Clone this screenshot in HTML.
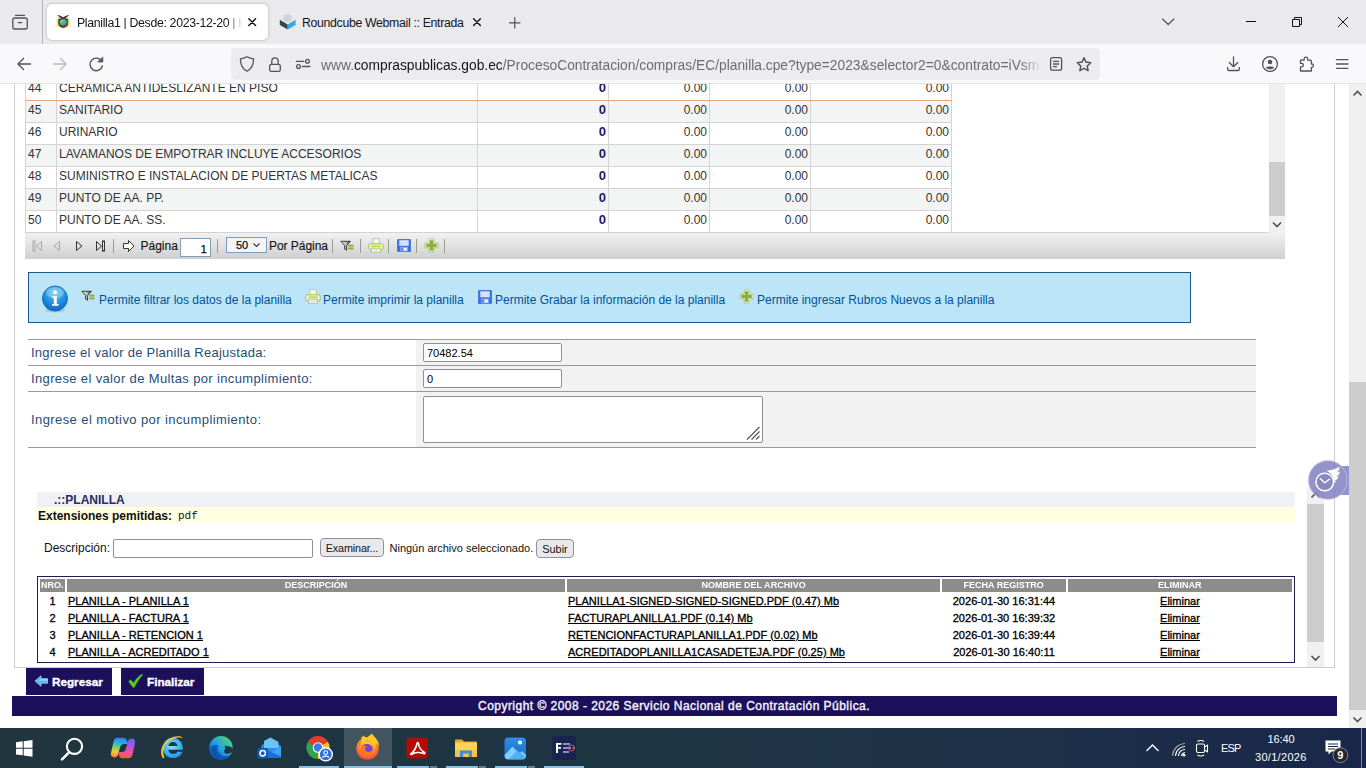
<!DOCTYPE html>
<html>
<head>
<meta charset="utf-8">
<title>Planilla1</title>
<style>
*{box-sizing:border-box;margin:0;padding:0}
html,body{width:1366px;height:768px;overflow:hidden;background:#fff;font-family:"Liberation Sans",sans-serif}
body{position:relative;font-family:"Liberation Sans",sans-serif;color:#000}
.a{position:absolute}
.t{position:absolute;white-space:nowrap;line-height:1}
/* browser chrome */
#tabbar{left:0;top:0;width:1366px;height:44px;background:#eaeaed}
#toolbar{left:0;top:44px;width:1366px;height:40px;background:#f9f9fb;border-bottom:1px solid #e3e3e7}
#tab1{left:47px;top:4px;width:221px;height:36px;background:#fff;border-radius:5px;box-shadow:0 0 3px rgba(0,0,0,.28)}
#urlbar{left:231px;top:48px;width:869px;height:32px;background:#ececef;border-radius:5px}
.tabtxt{font-size:12.3px;letter-spacing:-.33px;color:#15141a;top:17px}
/* page */
#page{left:14px;top:84px;width:1321px;height:584px;border:1px solid #ccc;border-top:none;background:#fff}
/* grid */
.row{position:absolute;left:25px;width:927px;height:22px;border-bottom:1px solid #d4d4d4;font-size:12px;color:#333}
.row.alt{background:#f3f4f4}
.row span{position:absolute;top:0;height:21px;line-height:19px;white-space:nowrap}
.row .c{border-left:1px solid #d4d4d4}
.row .n{left:0;width:31px;padding-left:2px;border-left:1px solid #d4d4d4}
.row .d{left:31px;width:421px;padding-left:2px;border-left:1px solid #d4d4d4}
.row .q{left:452px;width:131px;text-align:right;padding-right:2px;border-left:1px solid #d4d4d4;font-weight:bold;font-size:13px;line-height:18px!important;color:#1d1d6b}
.row .v1{left:583px;width:101px;text-align:right;padding-right:2px;border-left:1px solid #d4d4d4}
.row .v2{left:684px;width:101px;text-align:right;padding-right:2px;border-left:1px solid #d4d4d4}
.row .v3{left:785px;width:142px;text-align:right;padding-right:2px;border-left:1px solid #d4d4d4;border-right:1px solid #d4d4d4}
#pager{left:25px;top:233px;width:1260px;height:26px;background:linear-gradient(#f1f1f1,#e4e4e4 40%,#cfcfcf);font-size:12.6px}
/* info */
#info{left:28px;top:272px;width:1163px;height:51px;background:#bde5f8;border:1px solid #1c5a8c}
.it{font-size:12px;color:#00529b;top:294px}
/* form */
.fl{position:absolute;left:28px;width:1228px;height:1px;background:#999}
.lab{font-size:13px;color:#1f4e79;left:31px;letter-spacing:.55px}
.inp{position:absolute;background:#fff;border:1px solid #8f8f95;border-radius:2px;font-size:11px;padding-left:3px}
/* files */
.th{position:absolute;top:579px;height:13px;background:#8c8c8c;color:#fff;font-weight:bold;font-size:9.800px;text-align:center;line-height:11px}
.th span{display:inline-block;transform:scaleX(.92);white-space:nowrap}
.fr{font-size:11px;font-weight:400;color:#000;letter-spacing:.02px;-webkit-text-stroke:.32px #000}
.u{text-decoration:underline}
.btn{position:absolute;top:668px;height:27px;background:#1c0f5c;color:#fff;font-weight:bold;font-size:12px}
/* taskbar */
#taskbar{left:0;top:728px;width:1366px;height:40px;background:linear-gradient(90deg,#20353e 0%,#1e3545 50%,#1c2f48 80%,#19264a 100%)}
.tray{color:#fff;font-size:12px}
</style>
</head>
<body>
<!-- ===== TAB BAR ===== -->
<div id="tabbar" class="a"></div>
<div id="toolbar" class="a"></div>
<div class="a" style="left:42px;top:0;width:1px;height:44px;background:#b4b4ba"></div>
<div id="tab1" class="a"></div>
<div class="t tabtxt" style="left:77px;width:166px;overflow:hidden;-webkit-mask-image:linear-gradient(90deg,#000 150px,transparent 166px);mask-image:linear-gradient(90deg,#000 150px,transparent 166px)">Planilla1 | Desde: 2023-12-20 | H</div>
<div class="t tabtxt" style="left:302px">Roundcube Webmail :: Entrada</div>
<div id="urlbar" class="a"></div>
<svg class="a" style="left:0;top:0" width="1366" height="84" fill="none" stroke="#52525a" stroke-width="1.3" stroke-linecap="round" stroke-linejoin="round">
<!-- firefox view -->
<rect x="12.800" y="18" width="14.500" height="11" rx="2"/><path d="M15.500 15.300h9"/><path d="M18.300 22.600h3.500"/>
<!-- close tab 1 -->
<path d="M248.800 18.800l6.800 6.800M255.600 18.800l-6.800 6.800" stroke="#15141a" stroke-width="1.4"/>
<path d="M473.600 18.800l6.800 6.800M480.400 18.800l-6.800 6.800" stroke="#15141a" stroke-width="1.4"/>
<!-- new tab -->
<path d="M509.500 22.800h10.500M514.750 17.500v10.500" stroke-width="1.200"/>
<!-- chevron -->
<path d="M1162.500 19l5.700 5.500l5.700-5.500" stroke-width="1.200"/>
<!-- window controls -->
<g stroke="#111" stroke-width="1" stroke-linecap="butt" stroke-linejoin="miter"><path d="M1246 21.500h10"/><path d="M1292.500 19.500h7v7h-7z"/><path d="M1294.500 19.500v-2h7v7h-2"/><path d="M1338 17l10 10M1348 17l-10 10"/></g>
<!-- back / forward / reload -->
<path d="M30.500 64h-12.500M23.500 58.500l-5.500 5.500l5.500 5.500" stroke-width="1.400"/>
<path d="M53.500 64h12.500M60.500 58.500l5.500 5.500l-5.500 5.500" stroke="#b9b9bf" stroke-width="1.400"/>
<path d="M101.800 61.300a6.300 6.300 0 1 0 .6 4.700" stroke-width="1.400"/><path d="M102.800 57.300v4.700h-4.700z" fill="#52525a" stroke-width=".8"/>
<!-- shield -->
<path d="M247 56.700c2.300 1.300 4.300 1.900 6.600 2.100c0 6-1.800 10-6.600 12.400c-4.800-2.400-6.600-6.400-6.600-12.400c2.300-.2 4.300-.8 6.600-2.100z"/>
<!-- lock -->
<rect x="269.700" y="64.300" width="10.600" height="7" rx="1.600"/><path d="M271.800 64.300v-3.300a3.200 3.200 0 0 1 6.400 0v3.300"/>
<!-- permissions -->
<path d="M296.300 61.300h7.500"/><circle cx="307.500" cy="61.300" r="1.900"/><path d="M302.500 66.500h7.500"/><circle cx="298.500" cy="66.500" r="1.900"/>
<!-- reader -->
<rect x="1050.600" y="57.600" width="11" height="12.600" rx="2"/><path d="M1053.500 61.300h5.200M1053.500 64h5.200M1053.500 66.700h3"/>
<!-- star -->
<path d="M1084 57.800l2 4.300l4.700.6l-3.500 3.300l.9 4.600l-4.100-2.300l-4.100 2.300l.9-4.600l-3.500-3.300l4.700-.6z" stroke-width="1.500"/>
<!-- download -->
<path d="M1233.500 57v9.500M1229.300 62.500l4.200 4.200l4.200-4.200M1227.700 67.500v2a1 1 0 0 0 1 1h9.600a1 1 0 0 0 1-1v-2"/>
<!-- account -->
<circle cx="1270" cy="64" r="7.400"/><circle cx="1270" cy="62" r="2.300" fill="#52525a" stroke="none"/><path d="M1265.800 67.500c1-1.500 7.400-1.500 8.400 0c-1 2.300-7.400 2.300-8.400 0z" fill="#52525a" stroke="none"/>
<!-- extensions -->
<path d="M1300.500 71v-4.200h1.200a1.700 1.700 0 0 0 0-3.400h-1.200v-3.200h3.600v-1.300a1.800 1.800 0 0 1 3.600 0v1.300h2.700a1 1 0 0 1 1 1v2.800h.3a1.700 1.700 0 0 1 0 3.400h-.3v3.600z" transform="translate(0,0)"/>
<!-- menu -->
<path d="M1336.500 59.700h11.500M1336.500 64h11.500M1336.500 68.300h11.500" stroke-width="1.300"/>
</svg>
<!-- favicons -->
<svg class="a" style="left:56px;top:14px" width="15" height="15"><defs><linearGradient id="ec" x1="0" y1="0" x2="1" y2="1"><stop offset="0" stop-color="#9fe3d6"/><stop offset=".5" stop-color="#45b9b0"/><stop offset="1" stop-color="#3b8fd6"/></linearGradient><filter id="eb" x="-20%" y="-20%" width="140%" height="140%"><feGaussianBlur stdDeviation=".7"/></filter></defs><rect x=".6" y="4.600" width="13.400" height="8.600" rx="2" fill="#f6ea5e" opacity=".85" filter="url(#eb)"/><path d="M1.300 1c2 .3 4 .9 5.900 2.300c1.900-1.400 3.900-2 5.900-2.300c-1.500 1.600-3.300 3-4.600 3.400l-1.300 1.300l-1.300-1.300c-1.300-.4-3.100-1.800-4.600-3.400z" fill="#3c342c"/><path d="M2.300 4.800c1.500-.6 3.200-.9 4.900-.9s3.400.3 4.900.9v5c0 2.400-2 3.600-4.900 4.300c-2.900-.7-4.900-1.900-4.900-4.300z" fill="#5b4a2e"/><path d="M2.300 5.500c.5-.3 1-.6 1.500-.7v6.700c-1-.6-1.500-1.400-1.500-2.400zM12.100 5.500c-.5-.3-1-.6-1.500-.7v6.700c1-.6 1.500-1.400 1.500-2.400z" fill="#3f6a3a" opacity=".8"/><ellipse cx="7.300" cy="8.300" rx="3.300" ry="2.900" fill="url(#ec)"/><path d="M5.800 12.700h3l-1.500 1.700z" fill="#c4452f"/></svg>
<svg class="a" style="left:279px;top:14px" width="18" height="16"><path d="M8.700 .300c2.600 0 4.400 1.600 4.400 3.800v4.600L8.700 11 4.300 8.700V4.100c0-2.200 1.800-3.800 4.400-3.800z" fill="#e6e8ea"/><path d="M8.700 .300c2.600 0 4.400 1.600 4.400 3.800v2L8.700 8.500 4.300 6.100v-2c0-2.200 1.800-3.800 4.400-3.800z" fill="#d0d4d7"/><path d="M.800 5.800l7.900 4.600v5.200L.800 11z" fill="#37474f"/><path d="M16.600 5.800l-7.900 4.600v5.200l7.900-4.600z" fill="#37a8e0"/></svg>
<div class="t" style="left:321px;top:59px;font-size:13.8px;color:#6b6b75;width:720px;-webkit-mask-image:linear-gradient(90deg,#000 700px,transparent 720px);mask-image:linear-gradient(90deg,#000 700px,transparent 720px)">www.<span style="color:#15141a">compraspublicas.gob.ec</span>/ProcesoContratacion/compras/EC/planilla.cpe?type=2023&amp;selector2=0&amp;contrato=iVsm</div>

<!-- ===== PAGE ===== -->
<div id="page" class="a"></div>
<div id="grid" class="a" style="left:0;top:84px;width:1366px;height:149px;overflow:hidden"><div class="a" style="left:0;top:-84px">
<div class="row" style="top:79px;border-bottom-color:#f0a674"><span class="n">44</span><span class="d">CERAMICA ANTIDESLIZANTE EN PISO</span><span class="q">0</span><span class="v1">0.00</span><span class="v2">0.00</span><span class="v3">0.00</span></div>
<div class="row alt" style="top:101px"><span class="n">45</span><span class="d">SANITARIO</span><span class="q">0</span><span class="v1">0.00</span><span class="v2">0.00</span><span class="v3">0.00</span></div>
<div class="row" style="top:123px"><span class="n">46</span><span class="d">URINARIO</span><span class="q">0</span><span class="v1">0.00</span><span class="v2">0.00</span><span class="v3">0.00</span></div>
<div class="row alt" style="top:145px"><span class="n">47</span><span class="d">LAVAMANOS DE EMPOTRAR INCLUYE ACCESORIOS</span><span class="q">0</span><span class="v1">0.00</span><span class="v2">0.00</span><span class="v3">0.00</span></div>
<div class="row" style="top:167px"><span class="n">48</span><span class="d">SUMINISTRO E INSTALACION DE PUERTAS METALICAS</span><span class="q">0</span><span class="v1">0.00</span><span class="v2">0.00</span><span class="v3">0.00</span></div>
<div class="row alt" style="top:189px"><span class="n">49</span><span class="d">PUNTO DE AA. PP.</span><span class="q">0</span><span class="v1">0.00</span><span class="v2">0.00</span><span class="v3">0.00</span></div>
<div class="row" style="top:211px"><span class="n">50</span><span class="d">PUNTO DE AA. SS.</span><span class="q">0</span><span class="v1">0.00</span><span class="v2">0.00</span><span class="v3">0.00</span></div>
</div></div>
<div class="a" style="left:25px;top:232px;width:1260px;height:1px;background:#d2d2d2"></div>
<!-- grid scrollbar -->
<div class="a" style="left:1269px;top:84px;width:16px;height:149px;background:#f0f0f0"></div>
<div class="a" style="left:1269px;top:162px;width:16px;height:54px;background:#cdcdcd"></div>
<svg class="a" style="left:1269px;top:216px" width="16" height="17"><path d="M4 6.5l4 4 4-4" fill="none" stroke="#505050" stroke-width="1.6"/></svg>
<div id="pager" class="a"></div>

<!-- pager content -->
<svg class="a" style="left:25px;top:233px" width="430" height="26">
<g fill="none" stroke="#a8a8a8" stroke-width="1"><rect x="8" y="8" width="2" height="10"/><path d="M16.500 8.500v9l-5-4.500z"/><path d="M34.5 8.5v9l-5.5-4.5z"/></g>
<g fill="none" stroke="#333" stroke-width="1"><path d="M51.5 8.5v9l5.5-4.5z"/><path d="M71.500 8.500v9l5-4.500z"/><rect x="77.500" y="8" width="2" height="10"/></g>
<g stroke="#9a9a94" stroke-width="1"><path d="M88.5 6v14M192.5 6v14M307.5 6v14M335.5 6v14M363.5 6v14M391.5 6v14M419.5 6v14"/></g>
<path d="M98.500 10.500h5v-3l5.500 5.500l-5.500 5.500v-3h-5z" fill="#fff" stroke="#222" stroke-width=".9" stroke-linejoin="round"/>
</svg>
<div class="t" style="left:140.500px;top:239.500px;font-size:12px;color:#151515;-webkit-text-stroke:.15px #151515">Página</div>
<div class="a" style="left:180px;top:238px;width:31px;height:19px;background:#fff;border:1px solid #7f9db9;font-size:11.500px;text-align:right;padding-right:3px;line-height:20px;color:#111;-webkit-text-stroke:.25px #111">1</div>
<div class="a" style="left:226px;top:237px;width:41px;height:16px;background:#f4f4f4;border:1px solid #7f9db9;font-size:11px;line-height:15px;padding-left:9px;color:#111;-webkit-text-stroke:.25px #111">50</div>
<svg class="a" style="left:252px;top:241px" width="9" height="8"><path d="M1.500 2.500l3 3l3-3" fill="none" stroke="#333" stroke-width="1.1"/></svg>
<div class="t" style="left:269px;top:239.500px;font-size:12px;letter-spacing:-.05px;color:#151515;-webkit-text-stroke:.15px #151515">Por Página</div>
<svg class="a" style="left:340px;top:239.500px" width="15" height="12"><defs><linearGradient id="fg" x1="0" y1="0" x2="1" y2="0"><stop offset="0" stop-color="#f2f2f2"/><stop offset=".55" stop-color="#bdbdbd"/><stop offset="1" stop-color="#2a2a2a"/></linearGradient></defs><path d="M0.800 1.300h9.600L6.600 5.500v4.700L4.600 9V5.500z" fill="url(#fg)" stroke="#2b2b2b" stroke-width=".9" stroke-linejoin="round"/><rect x="8.300" y="4.700" width="5.200" height="1.900" fill="#8daa2c"/><rect x="8.300" y="7.500" width="5.200" height="1.900" fill="#8daa2c"/></svg>
<svg class="a" style="left:367.500px;top:237.500px" width="16" height="16"><rect x="5" y="0.700" width="6.200" height="6.500" fill="#fbfbf6" stroke="#b7c77e" stroke-width=".9"/><rect x="0.800" y="5.800" width="14.400" height="6.200" rx="2" fill="#f3f6e6" stroke="#a3bb58" stroke-width="1"/><rect x="3.300" y="7.400" width="9.400" height="1.900" fill="#b9e02c"/><rect x="3.500" y="10.300" width="9" height="3.900" fill="#fdfdfd" stroke="#a9bf6a" stroke-width=".8"/><path d="M5 12.300h6" stroke="#bbb" stroke-width=".7"/></svg>
<svg class="a" style="left:396.500px;top:239px" width="14" height="13" viewBox="0 0 14 14" preserveAspectRatio="none"><rect x="0.700" y="0.700" width="12.600" height="12.600" fill="#3a72ea" stroke="#2f63d6" stroke-width=".9"/><rect x="2.300" y="1.300" width="9.400" height="6" fill="#d5e3fb"/><rect x="3" y="8.600" width="8" height="4.700" fill="#7da4f2"/><rect x="6.300" y="9.400" width="3.600" height="3.200" fill="#eaf1ff"/><rect x="4.500" y="10.400" width="1.300" height="1.300" fill="#5a2a9a"/></svg>
<svg class="a" style="left:424px;top:238px" width="15" height="15"><path d="M5.200 .800h4.600v4.400h4.400v4.600H9.800v4.400H5.200V9.800H.800V5.200h4.400z" fill="#f6f9ea" stroke="#b3c77a" stroke-width="1" stroke-linejoin="round"/><path d="M5.900 2.200h3.200v3.700h3.700v3.200H9.100v3.700H5.900V9.100H2.200V5.900h3.700z" fill="#8bae3c"/></svg>
<!-- info -->
<div id="info" class="a"></div>
<svg class="a" style="left:41px;top:285px" width="28" height="28">
<defs><radialGradient id="ig" cx=".5" cy=".3" r=".75"><stop offset="0" stop-color="#5ec1f4"/><stop offset=".55" stop-color="#1f8fe0"/><stop offset="1" stop-color="#0d5fb4"/></radialGradient></defs>
<ellipse cx="14" cy="25" rx="10" ry="2.3" fill="#7fb2d6" opacity=".55"/>
<circle cx="14" cy="13.5" r="12.5" fill="url(#ig)" stroke="#1670c4" stroke-width="1"/>
<ellipse cx="14" cy="7.5" rx="9" ry="5.5" fill="#fff" opacity=".28"/>
<circle cx="14" cy="7.300" r="2" fill="#fff"/><path d="M11.300 11h4.500v8h1.700v1.800h-6.400V19h1.700v-6.200h-1.500z" fill="#fff"/>
</svg>
<svg class="a" style="left:80.500px;top:289.500px" width="15" height="12"><defs><linearGradient id="fg2" x1="0" y1="0" x2="1" y2="0"><stop offset="0" stop-color="#f2f2f2"/><stop offset=".55" stop-color="#bdbdbd"/><stop offset="1" stop-color="#2a2a2a"/></linearGradient></defs><path d="M0.800 1.300h9.600L6.600 5.500v4.700L4.600 9V5.500z" fill="url(#fg2)" stroke="#2b2b2b" stroke-width=".9" stroke-linejoin="round"/><rect x="8.300" y="4.700" width="5.200" height="1.900" fill="#8daa2c"/><rect x="8.300" y="7.500" width="5.200" height="1.900" fill="#8daa2c"/></svg>
<svg class="a" style="left:305px;top:289px" width="16" height="16"><rect x="5" y="0.700" width="6.200" height="6.500" fill="#fbfbf6" stroke="#b7c77e" stroke-width=".9"/><rect x="0.800" y="5.800" width="14.400" height="6.200" rx="2" fill="#f3f6e6" stroke="#a3bb58" stroke-width="1"/><rect x="3.300" y="7.400" width="9.400" height="1.900" fill="#b9e02c"/><rect x="3.500" y="10.300" width="9" height="3.900" fill="#fdfdfd" stroke="#a9bf6a" stroke-width=".8"/><path d="M5 12.300h6" stroke="#bbb" stroke-width=".7"/></svg>
<svg class="a" style="left:478px;top:290px" width="14" height="14"><rect x="0.700" y="0.700" width="12.600" height="12.600" fill="#3a72ea" stroke="#2f63d6" stroke-width=".9"/><rect x="2.300" y="1.300" width="9.400" height="6" fill="#d5e3fb"/><rect x="3" y="8.600" width="8" height="4.700" fill="#7da4f2"/><rect x="6.300" y="9.400" width="3.600" height="3.200" fill="#eaf1ff"/><rect x="4.500" y="10.400" width="1.300" height="1.300" fill="#5a2a9a"/></svg>
<svg class="a" style="left:739px;top:289px" width="15" height="15"><path d="M5.200 .800h4.600v4.400h4.400v4.600H9.800v4.400H5.200V9.800H.800V5.200h4.400z" fill="#f6f9ea" stroke="#b3c77a" stroke-width="1" stroke-linejoin="round"/><path d="M5.900 2.200h3.200v3.700h3.700v3.200H9.100v3.700H5.900V9.100H2.200V5.900h3.700z" fill="#8bae3c"/></svg>
<div class="t it" style="left:99px">Permite filtrar los datos de la planilla</div>
<div class="t it" style="left:323px">Permite imprimir la planilla</div>
<div class="t it" style="left:495px">Permite Grabar la información de la planilla</div>
<div class="t it" style="left:757px">Permite ingresar Rubros Nuevos a la planilla</div>
<!-- form -->
<div class="a" style="left:416px;top:340px;width:840px;height:107px;background:#f2f2f2"></div>
<div class="fl" style="top:339px"></div><div class="fl" style="top:365px"></div><div class="fl" style="top:391px"></div><div class="fl" style="top:447px"></div>
<div class="t lab" style="top:346px;letter-spacing:.25px">Ingrese el valor de Planilla Reajustada:</div>
<div class="t lab" style="top:372px;letter-spacing:.36px">Ingrese el valor de Multas por incumplimiento:</div>
<div class="t lab" style="top:413px;letter-spacing:.41px">Ingrese el motivo por incumplimiento:</div>
<div class="inp" style="left:423px;top:343px;width:139px;height:19px;line-height:18px">70482.54</div>
<div class="inp" style="left:423px;top:369px;width:139px;height:19px;line-height:18px">0</div>
<div class="inp" style="left:423px;top:396px;width:340px;height:47px"></div>
<svg class="a" style="left:745px;top:425px" width="16" height="16"><path d="M2 14.5L14.5 2M6.5 14.5l8-8M11 14.5l3.5-3.5" stroke="#55555f" stroke-width="1.1" fill="none"/></svg>
<!-- files -->
<div class="a" style="left:37px;top:492px;width:1258px;height:15px;background:#eff1f4"></div>
<div class="t" style="left:54px;top:494px;font-size:12px;font-weight:bold;color:#2a2a60">.::PLANILLA</div>
<div class="a" style="left:37px;top:507px;width:1258px;height:16px;background:#ffffe2"></div>
<div class="t" style="left:38px;top:510px;font-size:12px;font-weight:bold;color:#111">Extensiones pemitidas:</div>
<div class="t" style="left:178px;top:511px;font-size:11px;font-family:'Liberation Mono',monospace;color:#111">pdf</div>
<div class="t" style="left:44px;top:542px;font-size:12px;color:#111">Descripción:</div>
<div class="inp" style="left:113px;top:539px;width:200px;height:19px"></div>
<div class="a" style="left:320px;top:538px;width:64px;height:19px;background:#e9e9ed;border:1px solid #8f8f9d;border-radius:4px;font-size:10.800px;letter-spacing:-.15px;text-align:center;line-height:18px;color:#111">Examinar...</div>
<div class="t" style="left:389.500px;top:543px;font-size:11px;color:#111">Ningún archivo seleccionado.</div>
<div class="a" style="left:536px;top:539px;width:38px;height:19px;background:#e9e9ed;border:1px solid #8f8f9d;border-radius:4px;font-size:10.900px;text-align:center;line-height:18px;color:#111">Subir</div>
<div class="a" style="left:37px;top:576px;width:1258px;height:87px;border:1px solid #1f1f4f"></div>
<div class="th" style="left:40px;width:25px"><span>NRO.</span></div>
<div class="th" style="left:67px;width:498px"><span>DESCRIPCIÓN</span></div>
<div class="th" style="left:567px;width:373px"><span>NOMBRE DEL ARCHIVO</span></div>
<div class="th" style="left:942px;width:124px"><span>FECHA REGISTRO</span></div>
<div class="th" style="left:1068px;width:224px"><span>ELIMINAR</span></div>
<div class="t fr" style="left:40px;width:25px;text-align:center;top:596px">1</div><div class="t fr u" style="left:68px;top:596px">PLANILLA - PLANILLA 1</div><div class="t fr u" style="left:568px;top:596px">PLANILLA1-SIGNED-SIGNED-SIGNED.PDF (0.47) Mb</div><div class="t fr" style="left:942px;width:124px;text-align:center;top:596px">2026-01-30 16:31:44</div><div class="t fr u" style="left:1068px;width:224px;text-align:center;top:596px">Eliminar</div>
<div class="t fr" style="left:40px;width:25px;text-align:center;top:613px">2</div><div class="t fr u" style="left:68px;top:613px">PLANILLA - FACTURA 1</div><div class="t fr u" style="left:568px;top:613px">FACTURAPLANILLA1.PDF (0.14) Mb</div><div class="t fr" style="left:942px;width:124px;text-align:center;top:613px">2026-01-30 16:39:32</div><div class="t fr u" style="left:1068px;width:224px;text-align:center;top:613px">Eliminar</div>
<div class="t fr" style="left:40px;width:25px;text-align:center;top:630px">3</div><div class="t fr u" style="left:68px;top:630px">PLANILLA - RETENCION 1</div><div class="t fr u" style="left:568px;top:630px">RETENCIONFACTURAPLANILLA1.PDF (0.02) Mb</div><div class="t fr" style="left:942px;width:124px;text-align:center;top:630px">2026-01-30 16:39:44</div><div class="t fr u" style="left:1068px;width:224px;text-align:center;top:630px">Eliminar</div>
<div class="t fr" style="left:40px;width:25px;text-align:center;top:647px">4</div><div class="t fr u" style="left:68px;top:647px">PLANILLA - ACREDITADO 1</div><div class="t fr u" style="left:568px;top:647px">ACREDITADOPLANILLA1CASADETEJA.PDF (0.25) Mb</div><div class="t fr" style="left:942px;width:124px;text-align:center;top:647px">2026-01-30 16:40:11</div><div class="t fr u" style="left:1068px;width:224px;text-align:center;top:647px">Eliminar</div>
<!-- inner scrollbar -->
<div class="a" style="left:1307px;top:487px;width:17px;height:180px;background:#f0f0f0"></div>
<div class="a" style="left:1307px;top:504px;width:17px;height:138px;background:#cdcdcd"></div>
<svg class="a" style="left:1307px;top:487px" width="17" height="17"><path d="M4.5 10.5l4-4 4 4" fill="none" stroke="#505050" stroke-width="1.6"/></svg>
<svg class="a" style="left:1307px;top:650px" width="17" height="17"><path d="M4.5 6l4 4 4-4" fill="none" stroke="#505050" stroke-width="1.6"/></svg>
<!-- buttons -->
<div class="btn" style="left:26px;width:86px"></div>
<div class="t" style="left:52px;top:676px;font-size:11.7px;font-weight:bold;color:#fff;-webkit-text-stroke:.35px #fff">Regresar</div>
<div class="btn" style="left:121px;width:83px"></div>
<div class="t" style="left:147px;top:676px;font-size:11.7px;font-weight:bold;color:#fff;-webkit-text-stroke:.35px #fff">Finalizar</div>
<svg class="a" style="left:34px;top:675px" width="15" height="12"><path d="M7 .8L1 6l6 5.200v-3h6.500v-4.500H7z" fill="#5fb4e6" stroke="#9fd3f2" stroke-width=".8" stroke-linejoin="round"/><path d="M7 3.700h6.500v2H3.500z" fill="#9fd8f7" opacity=".8"/></svg>
<svg class="a" style="left:127px;top:673px" width="17" height="16"><path d="M1.500 8.500l2.300-1.800l2.700 3.300c2-3.500 5-7 8.500-9l.8 1c-3.500 3.500-6.300 8-8.500 12.500h-1.300z" fill="#5ecb2a" stroke="#2f8f14" stroke-width=".6"/></svg>
<!-- footer -->
<div class="a" style="left:12px;top:696px;width:1325px;height:20px;background:#1c0f5c"></div>
<div class="t" style="left:478px;top:700px;font-size:12px;font-weight:400;color:#f4f4fa;letter-spacing:.47px;-webkit-text-stroke:.4px #f4f4fa">Copyright © 2008 - 2026 Servicio Nacional de Contratación Pública.</div>
<!-- main scrollbar -->
<div class="a" style="left:1349px;top:84px;width:17px;height:644px;background:#f0f0f0"></div>
<div class="a" style="left:1349px;top:382px;width:17px;height:328px;background:#cdcdcd"></div>
<svg class="a" style="left:1349px;top:85px" width="17" height="17"><path d="M4.5 10.5l4-4 4 4" fill="none" stroke="#505050" stroke-width="1.6"/></svg>
<svg class="a" style="left:1349px;top:711px" width="17" height="17"><path d="M4.5 6.5l4 4 4-4" fill="none" stroke="#505050" stroke-width="1.6"/></svg>
<!-- purple widget -->
<svg class="a" style="left:1300px;top:455px" width="52" height="50">
<g opacity=".84"><rect x="40" y="11" width="9" height="29" fill="#8080c2"/><circle cx="27.900" cy="25" r="19.600" fill="#8080c2"/></g>
<circle cx="27.900" cy="25" r="19.200" fill="none" stroke="#c4c4e2" stroke-opacity=".55" stroke-width="1.200"/>
<circle cx="24.750" cy="27" r="8.800" fill="#8a82bc" fill-opacity=".7" stroke="#fff" stroke-width="1.500"/>
<path d="M20.300 23.700l4.500 4l4.600-3.500" fill="none" stroke="#fff" stroke-width="1.400" stroke-linecap="round" stroke-linejoin="round"/>
<path d="M26.500 15.800c4-.5 9.500-1.500 13-4c.3 2-.8 4-2.500 5.500c1.300 0 2.300-.4 3-1c-.3 2.500-1.800 4.300-3.800 5.500c1 .1 1.800 0 2.500-.4c-.8 2.200-2.300 3.600-4.300 4.300c.6.300 1.200.3 1.800.2c-.8 1.300-1.800 2-3 2.300c1.500-4.500-.5-9.500-6.700-12.400z" fill="#fff"/>
</svg>

<!-- ===== TASKBAR ===== -->
<div id="taskbar" class="a"></div>
<div class="a" style="left:344px;top:728px;width:48px;height:40px;background:rgba(255,255,255,.16)"></div>
<svg class="a" style="left:0;top:728px" width="1366" height="40">
<defs>
<linearGradient id="cop" x1=".5" y1="0" x2=".35" y2="1"><stop offset="0" stop-color="#2f7ff5"/><stop offset=".32" stop-color="#2bbfd0"/><stop offset=".55" stop-color="#8fd04e"/><stop offset=".75" stop-color="#f6c935"/><stop offset="1" stop-color="#f2832e"/></linearGradient>
<linearGradient id="cop2" x1=".5" y1="0" x2=".35" y2="1"><stop offset="0" stop-color="#f2603a"/><stop offset=".3" stop-color="#f0509a"/><stop offset=".65" stop-color="#b250e8"/><stop offset="1" stop-color="#5a6cf2"/></linearGradient>
<linearGradient id="edg" x1="1" y1=".1" x2=".1" y2=".9"><stop offset="0" stop-color="#62d46a"/><stop offset=".3" stop-color="#35c0a8"/><stop offset=".55" stop-color="#259fe0"/><stop offset="1" stop-color="#1470cc"/></linearGradient>
<radialGradient id="ffx" cx=".5" cy=".35" r=".7"><stop offset="0" stop-color="#ffde3a"/><stop offset=".45" stop-color="#ff9a1f"/><stop offset="1" stop-color="#f0353e"/></radialGradient>
<linearGradient id="pho" x1="0" y1="0" x2="0" y2="1"><stop offset="0" stop-color="#2f8fe8"/><stop offset="1" stop-color="#1669c8"/></linearGradient>
</defs>
<!-- indicators -->
<g fill="#86c1ea"><rect x="299" y="38" width="40" height="2"/><rect x="344" y="38" width="48" height="2"/><rect x="397" y="38" width="32" height="2"/><rect x="446" y="38" width="32" height="2"/><rect x="495" y="38" width="32" height="2"/><rect x="544" y="38" width="40" height="2"/></g>
<g fill="#5f7d96"><rect x="430" y="38" width="7" height="2"/><rect x="479" y="38" width="7" height="2"/><rect x="528" y="38" width="7" height="2"/></g>
<!-- windows -->
<g fill="#fff"><path d="M16 14.300l6.700-.95v6.500H16z"/><path d="M23.700 13.200l8.800-1.250v7.900h-8.800z"/><path d="M16 20.850h6.700v6.500L16 26.400z"/><path d="M23.700 20.850h8.800v7.900l-8.800-1.250z"/></g>
<!-- search -->
<circle cx="74.500" cy="18.300" r="7.600" fill="none" stroke="#fff" stroke-width="2.100"/><path d="M69 24.300l-7 7" stroke="#fff" stroke-width="2.600" stroke-linecap="round"/>
<!-- copilot -->
<path d="M116.500 9.800h7a3.600 3.600 0 0 1 3.500 2.700l1 3.500h-4.200a3.700 3.700 0 0 0-3.500 2.600l-2.300 8.200a3.700 3.700 0 0 1-3.500 2.600h-.4a3.300 3.300 0 0 1-3.200-4.200l2.700-12.200a4 4 0 0 1 2.900-3.200z" fill="url(#cop)"/><path d="M116.500 9.800h7a3.600 3.600 0 0 1 3.500 2.700l1 3.500h-4.200a3.700 3.700 0 0 0-3.500 2.600l-2.300 8.200a3.700 3.700 0 0 1-3.500 2.600h-.4a3.300 3.300 0 0 1-3.200-4.200l2.700-12.200a4 4 0 0 1 2.900-3.200z" fill="url(#cop2)" transform="rotate(180 123 20)"/>
<!-- IE -->
<defs><radialGradient id="ieg" cx=".45" cy=".4" r=".7"><stop offset="0" stop-color="#8fe2ff"/><stop offset=".6" stop-color="#36b4f2"/><stop offset="1" stop-color="#168ad8"/></radialGradient></defs>
<path d="M172.800 9.800c5.700 0 10 4.300 10 10.500v1.400h-14.600c.3 2.600 2.200 4.300 5 4.300c2 0 3.400-.8 4.300-2.200h4.900c-1.300 4-4.800 6.300-9.400 6.300c-5.900 0-10-4.200-10-10.100c0-5.900 4-10.200 9.800-10.200zm-4.500 8.200h9.300c-.4-2.500-2.100-4.100-4.700-4.100c-2.500 0-4.200 1.600-4.600 4.100z" fill="url(#ieg)"/>
<path d="M163 30.500C158.500 24 162 12.500 173 9C177 7.700 181.500 7.800 183.300 10.300C180 8.900 176.500 9.400 173.500 10.600C164.500 14 161.300 23 164.500 29.500z" fill="#f2c832"/>
<!-- edge -->
<circle cx="221" cy="19.800" r="11.700" fill="url(#edg)"/>
<path d="M209.400 21c-.5 6 4.500 10.600 11.400 10.600c4.200 0 7.500-1.600 9.900-4.600c-3 1.600-7.200 1.400-9.900-.6c-3-2.200-4-5.800-2.400-8.800c-3.300-1.300-8-.3-9 3.400z" fill="#0f5cb8"/>
<path d="M212.500 24.500c1.200 4 5 6.800 9.500 6.800c-3.500-1-6-3.600-6.600-7c-.4-2.200.2-4.300 1.500-5.900c-2.500.8-4.600 3-4.400 6.100z" fill="#0a4a9c" opacity=".7"/>
<path d="M233 20.600c.1 2.900-2 5.200-5.300 5.200c-2.200 0-3.600-.9-3.600-2.300c0-1.200 1-1.800 1-3.500c0-.7-.2-1.400-.5-2c3-.3 6.500.3 8.400 2.600z" fill="#1f3540"/>
<!-- outlook -->
<path d="M261 18l9.500-7.500l10.500 7.500v10.500a1.500 1.500 0 0 1-1.500 1.500h-17a1.500 1.500 0 0 1-1.500-1.500z" fill="#2a8de8"/><path d="M264 13l6.500-3.500l8 4.500v6h-14.500z" fill="#6cc3f7"/><path d="M261 18l10 6l10-6v10.500a1.500 1.500 0 0 1-1.500 1.500h-17a1.500 1.500 0 0 1-1.500-1.500z" fill="#1a6fd4"/><path d="M271 24l10-6v10.500z" fill="#3fa3f0"/><rect x="257.500" y="20" width="10.500" height="10.500" rx="1.500" fill="#0f5cc0"/><circle cx="262.750" cy="25.250" r="2.700" fill="none" stroke="#fff" stroke-width="1.500"/>
<!-- chrome -->
<path d="M318 19.500L308.040 13.750A11.500 11.500 0 0 1 327.960 13.750Z" fill="#e33b2e"/><path d="M318 19.500L327.960 13.750A11.500 11.500 0 0 1 318 31Z" fill="#f7c12c"/><path d="M318 19.500L318 31A11.500 11.500 0 0 1 308.040 13.750Z" fill="#2ea44f"/><path d="M318 14.300h9.600a11.500 11.500 0 0 0-19.600-.500l5 4z" fill="#e33b2e"/><circle cx="318" cy="19.500" r="5.300" fill="#fff"/><circle cx="318" cy="19.500" r="4.200" fill="#3b7de9"/>
<circle cx="325.700" cy="26.300" r="6.600" fill="#2f6fe0" stroke="#fff" stroke-width="1.400"/><circle cx="325.700" cy="24.600" r="1.900" fill="none" stroke="#fff" stroke-width="1.100"/><path d="M322.300 29.600c.8-2 6-2 6.800 0" fill="none" stroke="#fff" stroke-width="1.100"/>
<!-- firefox -->
<circle cx="367.500" cy="20.500" r="11.300" fill="url(#ffx)"/><path d="M361 10c1-1 2-1.500 2.500-2.500c1 1.500 2.500 2 3.500 2c2-2 4-2.500 5-4c1 2 2.500 3 4 5c2 2.500 3 5 3 8c-1-2-2-3-3.500-3.500c.5 2 .3 4-.5 5.500c0-3-2-5.500-4-6.500c-2-1-3-2-3.500-3.500c-1.500 1-2 2.500-1.500 4c-2 0-3.500 1-4.500 2.500c0-3 .5-5 0-7z" fill="#ffc928"/><circle cx="367" cy="21.500" r="5.800" fill="#7a3fe0"/><path d="M362 19c1.500-1.500 4-1.500 5.500-.5c-1.500 0-2.500 1-2.500 2.500s1.500 3 3.500 3c2.500 0 4-2 4-4c1 3-1 7.500-5.500 7.500c-3.500 0-6-3-6-6c0-1 .4-1.800 1-2.500z" fill="#ff7a1f"/>
<!-- acrobat -->
<rect x="406.500" y="9.500" width="21.500" height="21" rx="4" fill="#b30b00"/><path d="M411 25.500c2-1 5-5 6-10c.3-1.500 1.500-1.500 1.500 0c0 3 2.500 7 5.500 8.500c1.500.7 1 2-.5 1.500c-3-1-8-1-11 .5c-1.500 1-2.500.3-1.500-.5z" fill="none" stroke="#fff" stroke-width="1.500" stroke-linejoin="round"/>
<!-- explorer -->
<path d="M455 12.500a1 1 0 0 1 1-1h6l2 2h12a1 1 0 0 1 1 1v2h-22z" fill="#e8a92a"/><rect x="455" y="14.500" width="22" height="14.500" rx="1" fill="#ffd35a"/><rect x="455" y="22" width="22" height="7" fill="#f5c242"/><path d="M460 29v-6.500h12v6.500h-3.200v-3.500h-5.600v3.500z" fill="#3b8fe0"/>
<!-- photos -->
<rect x="504.500" y="9.500" width="21.500" height="21.500" rx="4" fill="url(#pho)"/><circle cx="520" cy="14.500" r="2" fill="#fff"/><path d="M504.500 27l8-8.500l7 7l2.500-2.500l4 4v.5a4 4 0 0 1-4 4h-13.500a4 4 0 0 1-4-4z" fill="#7fd0fa"/><path d="M509 31l8.500-8.500l8.500 6.500a4 4 0 0 1-4 2z" fill="#4fb0f0"/>
<!-- FE -->
<rect x="552.500" y="8" width="23.500" height="24" fill="#1b2350"/><path d="M556 15h5.500v1.800h-3.500v2.200h3v1.800h-3v4.200h-2z" fill="#fff"/><path d="M563 16h7M563 20h8M563 24h6" stroke="#b9b3e8" stroke-width="1.300"/><circle cx="571.500" cy="20" r="3" fill="none" stroke="#d05a8a" stroke-width=".9"/><path d="M572 20h3" stroke="#e08a3a" stroke-width="1"/>
<!-- tray -->
<g fill="none" stroke="#fff" stroke-width="1.300"><path d="M1146.500 23l6-6l6 6"/></g>
<g fill="none" stroke="#fff" stroke-width="1.200" stroke-linecap="round"><path d="M1172.500 27.500a13 13 0 0 1 12-12" opacity=".55"/><path d="M1175.500 27.500a10 10 0 0 1 9-9"/><path d="M1178.500 27.500a7 7 0 0 1 6-6"/><path d="M1181.500 27.500a4 4 0 0 1 3-3"/></g><circle cx="1184" cy="27.200" r="1.400" fill="#fff"/>
<g fill="none" stroke="#fff" stroke-width="1.100"><rect x="1196.500" y="16" width="8" height="8.500" rx="1.500"/><path d="M1204.500 19l3-1.800v6.600l-3-1.800"/><path d="M1197.500 13.500c1.500-1.300 5-1.300 6.500 0M1197.500 27c1.500 1.300 5 1.300 6.500 0"/></g>
<path d="M1325.500 12.500h15v11h-9l-3 3v-3h-3z" fill="#fff"/><path d="M1328 16h10M1328 18.500h10M1328 21h7" stroke="#1a2747" stroke-width="1"/><circle cx="1340.400" cy="27.200" r="7.400" fill="#26262e" stroke="#8a8f9c" stroke-width=".9"/>
<rect x="1361" y="0" width="1" height="40" fill="#7c8698"/>
</svg>
<div class="t tray" style="left:1221px;top:742.500px;font-size:11px;letter-spacing:-.8px">ESP</div>
<div class="t tray" style="left:1267.500px;top:733.500px;font-size:11px;letter-spacing:-.1px">16:40</div>
<div class="t tray" style="left:1255px;top:751.500px;font-size:11px;letter-spacing:.3px">30/1/2026</div>
<div class="t tray" style="left:1336.400px;top:749.800px;font-size:11px;font-weight:bold;width:8px;text-align:center">9</div>
</body>
</html>
